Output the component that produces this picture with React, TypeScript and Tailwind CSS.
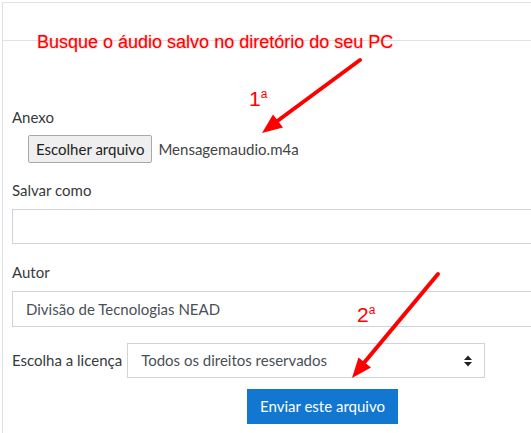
import React from 'react';

const labelFont = { fontFamily: 'Lato, "Noto Sans", sans-serif' };

// Red annotations drawn over the form
const Annotations = () => (
  <div className="pointer-events-none absolute inset-0">
    <div
      className="absolute left-[37px] top-[33px] text-[18px] leading-[18px] text-[#ff0000] whitespace-nowrap [text-shadow:0_0_2px_rgba(255,0,0,0.35)]"
      style={{ fontFamily: '"Liberation Sans", Arial, sans-serif' }}
    >
      Busque o áudio salvo no diretório do seu PC
    </div>
    <div
      className="absolute left-[249px] top-[88px] text-[21px] leading-[21px] text-[#ff0000]"
      style={{ fontFamily: '"Liberation Sans", Arial, sans-serif' }}
    >
      1<span className="relative -top-[8px] text-[12px]">a</span>
    </div>
    <div
      className="absolute left-[357px] top-[304px] text-[21px] leading-[21px] text-[#ff0000]"
      style={{ fontFamily: '"Liberation Sans", Arial, sans-serif' }}
    >
      2<span className="relative -top-[8px] text-[12px]">a</span>
    </div>
    <svg className="absolute inset-0" width="531" height="433" viewBox="0 0 531 433">
      <line x1="360" y1="60" x2="276" y2="122" stroke="#ff0000" strokeWidth="4" strokeLinecap="round" />
      <polygon points="262,133 273,114.5 283,127.5" fill="#ff0000" />
      <line x1="438" y1="274" x2="363" y2="364" stroke="#ff0000" strokeWidth="4" strokeLinecap="round" />
      <polygon points="352,378 358.5,357.5 371,367.5" fill="#ff0000" />
    </svg>
  </div>
);

const SelectArrows = () => (
  <svg width="8" height="12" viewBox="0 0 8 12" className="shrink-0">
    <polygon points="4,0.5 8,5 0,5" fill="#222" />
    <polygon points="0,7 8,7 4,11.5" fill="#222" />
  </svg>
);

export default function App() {
  return (
    <div className="relative w-[531px] h-[433px] overflow-hidden bg-white pt-[2px] pl-[2px]" style={labelFont}>
      <div className="h-full border-l border-t border-[#dee2e6]">
        <div className="h-[38px] border-b border-[#dee2e6]" />
        <div className="pl-[9px] text-[15px] text-[#373a3c]">
          <div className="mt-[65px] h-[22px] leading-[22px]">Anexo</div>
          <div className="mt-[7px] flex items-center gap-[6px] pl-[16px]">
            <button className="h-[28px] px-[7px] bg-[#efefef] border border-[#a9a9a9] rounded-[2px] text-[15px] text-[#222]">
              Escolher arquivo
            </button>
            <span className="text-[#444]">Mensagemaudio.m4a</span>
          </div>

          <div className="mt-[16px] h-[22px] leading-[22px]">Salvar como</div>
          <div className="mt-[8px] h-[35px] w-[540px] border border-[#ced4da]" />

          <div className="mt-[17px] h-[22px] leading-[22px]">Autor</div>
          <div className="mt-[8px] h-[36px] w-[540px] border border-[#ced4da] flex items-center pl-[13px] text-[#495057]">
            Divisão de Tecnologias NEAD
          </div>

          <div className="mt-[16px] flex items-center gap-[5px]">
            <span className="whitespace-nowrap">Escolha a licença</span>
            <div className="h-[35px] w-[358px] border border-[#ced4da] flex items-center justify-between pl-[13px] pr-[12px] text-[#495057]">
              <span>Todos os direitos reservados</span>
              <SelectArrows />
            </div>
          </div>

          <div className="mt-[11px] pl-[235px]">
            <button className="h-[35px] w-[151px] bg-[#1177d1] text-white text-[15px]">Enviar este arquivo</button>
          </div>
        </div>
      </div>
      <Annotations />
    </div>
  );
}
